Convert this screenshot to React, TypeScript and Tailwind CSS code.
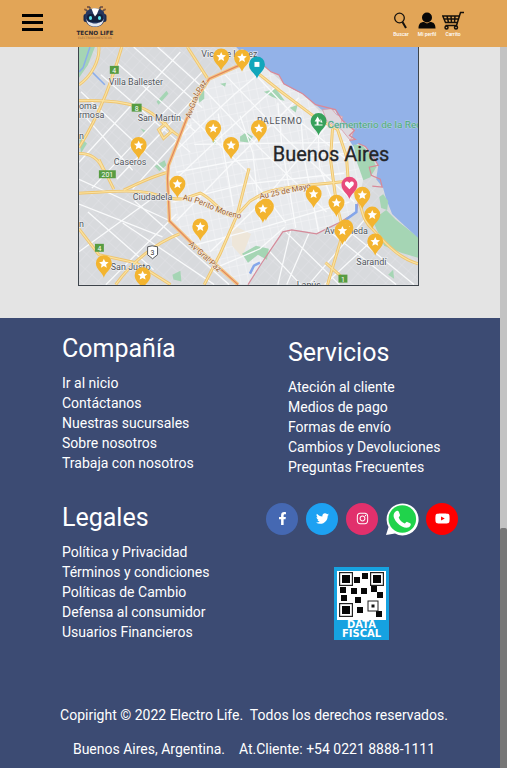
import type { ReactNode } from "react";
import { FaFacebookF, FaTwitter, FaInstagram, FaYoutube } from "react-icons/fa";

const company = ["Ir al nicio", "Contáctanos", "Nuestras sucursales", "Sobre nosotros", "Trabaja con nosotros"];
const services = ["Ateción al cliente", "Medios de pago", "Formas de envío", "Cambios y Devoluciones", "Preguntas Frecuentes"];
const legal = ["Política y Privacidad", "Términos y condiciones", "Políticas de Cambio", "Defensa al consumidor", "Usuarios Financieros"];

function LinkList({ title, items }: { title: string; items: string[] }) {
  return (
    <nav aria-label={title}>
      <h2 className="text-[25px] leading-8">{title}</h2>
      <ul className="mt-2 text-sm leading-5">
        {items.map((item) => (
          <li key={item} className="whitespace-nowrap">
            <a href="#">{item}</a>
          </li>
        ))}
      </ul>
    </nav>
  );
}

function HeaderButton({ label, children }: { label: string; children: ReactNode }) {
  return (
    <button type="button" className="flex w-[26px] flex-col items-center pt-[5px]">
      {children}
      <span className="text-[5px] leading-[7px] font-medium whitespace-nowrap text-white">{label}</span>
    </button>
  );
}

function Logo() {
  return (
    <svg viewBox="72 4 46 36" className="h-9 w-[46px]" role="img" aria-label="Tecno Life">
      <g fill="none" stroke="#2b3350" strokeWidth="1">
        <path d="M87 13V10H85M90 11V7H87M100 11V7H103M103 13V10H105" />
      </g>
      <g fill="#8b5a3a">
        <circle cx="85" cy="9.500" r="1" />
        <circle cx="88" cy="7" r="1" />
        <circle cx="102" cy="7" r="1" />
        <circle cx="105" cy="9.500" r="1" />
      </g>
      <rect x="83.500" y="14" width="4" height="8" rx="2" fill="#1d2b4c" />
      <rect x="102.500" y="14" width="4" height="8" rx="2" fill="#1d2b4c" />
      <path d="M85 17C85 11 89 8.500 95 8.500S105 11 105 17C105 23 101 27 95 27S85 23 85 17Z" fill="#26375f" />
      <path d="M86.500 19C88 22 92 23.500 95 23.500S102 22 103.500 19C103.500 24 100 26.500 95 26.500S86.500 24 86.500 19Z" fill="#e4e8ef" />
      <rect x="87" y="14" width="16" height="8" rx="3.500" fill="#14213d" />
      <path d="M91.500 8.800C94 8 97 8.200 99 9L97 14L95 16.500L93.500 14Z" fill="#fff" />
      <ellipse cx="90.500" cy="18" rx="1.600" ry="2" fill="#62e5ef" />
      <ellipse cx="99.500" cy="18" rx="1.600" ry="2" fill="#62e5ef" />
      <text x="95" y="35" textAnchor="middle" fontFamily="DejaVu Sans, sans-serif" fontWeight="700" fontSize="5.700" fill="#2d2932">TECNO LIFE</text>
      <text x="95" y="38.500" textAnchor="middle" fontFamily="DejaVu Sans, sans-serif" fontSize="3" fill="#9a6a3a">ELECTRODOMESTICOS</text>
    </svg>
  );
}

const stars = [
  [221, 57], [242, 58], [213, 129], [231, 146], [259, 129], [138, 146], [177, 185], [200, 228],
  [103, 265], [142, 277], [266, 208], [263, 210], [314, 195], [337, 204], [363, 196], [373, 216],
  [376, 243], [346, 229], [343, 232],
];

function Pin({ x, y, color, children }: { x: number; y: number; color: string; children: ReactNode }) {
  return (
    <g transform={`translate(${x} ${y})`}>
      <path d="M0 14C-1 9-8 6-8-0.500A8 8 0 0 1 8-0.500C8 6 1 9 0 14Z" fill={color} />
      {children}
    </g>
  );
}

const city = "M250 60L242 66L209 79L197 97L186 120L168 166L167 179L169 222L190 243L238 286H248L262 264L283 233L292 231L305 232L317 235L330 227L341 223L357 213L359 203L364 180L358 150L350 137L354 131L343 122L337 113L320 112L303 93L283 83L272 73L262 64Z";
const water = "M236 47H419V239L407 228L393 215L387 200L384 189L377 180L379 166L373 156L366 147L359 144L354 147L350 141L356 140L350 136L355 131L347 129L343 121L338 117L336 110L323 111L316 105L303 94L294 90L284 84L279 75L271 72L262 64L258 57L240 51Z";
const orangeRoads = [
  "M98 47C99 61 90 77 78 85", "M121 47C113 74 101 112 78 148", "M78 101C100 100 119 101 137 107C154 111 166 129 178 136",
  "M78 194C105 193 132 190 150 194C157 196 165 200 182 200L200 194C214 200 226 222 237 216L250 202L264 194C284 187 317 185 350 182",
  "M187 47L207 78", "M250 67L280 91L316 118L338 130L347 157L349 184", "M333 129L331 160L337 205L344 232L328 286",
  "M78 154C90 154 98 160 102 170M98 160L113 190", "M123 191C140 183 154 176 168 173", "M78 230L98 256L135 264L170 286",
  "M115 286C132 262 156 244 179 235", "M249 169L237 216L220 255L204 286", "M349 184C366 201 358 218 374 231C386 244 400 260 419 265",
  "M326 264L343 279", "M158 130L165 124L171 132L163 139Z",
];
const streets = [
  "M80 92L166 173M78 110L132 171M100 75L190 153M115 62L195 132M133 47L202 108M157 47L205 90",
  "M180 52L78 163M202 72L91 189M204 88L116 180M191 125L132 190",
  "M78 205L162 238M78 180L170 222M78 253L151 200M105 286L176 215M122 224L214 286M134 202L229 286M87 213L153 271",
  "M203 89L262 151L327 213M192 119L245 170L286 224M225 75L288 141L355 203M253 72L300 122L348 161",
  "M177 150L207 120L235 94L259 74M171 184L223 135L276 87M176 222L233 163L299 98M210 253L263 202L330 123",
  "M172 203L245 185L345 174M176 173L239 161L347 154M194 145L263 144L347 143M195 246L261 229L350 203M216 269L260 250L285 228",
  "M240 116L253 154L260 220M278 103L282 145L296 229M301 116L304 156L319 233M318 119L320 168L340 220M218 114L224 155L233 207",
  "M291 231L278 286M309 235L287 286M327 230L397 286M342 226L415 286M286 233L340 286M270 253L301 286M365 221L309 286M380 235L325 286",
];
const parks = [
  "M78 47H94L87 65L78 78Z", "M156 102L166 91L168 94L158 105Z", "M198 97L204 89L204 99L199 103Z",
  "M154 167L164 161L166 166L159 172Z", "M240 137L246 133L253 137L249 143L240 142Z", "M264 92L276 89L285 101L280 100L272 97Z",
  "M290 108L298 105L296 113Z", "M373 221L387 211L397 221L419 238V259L402 254L385 247Z",
  "M242 255L256 247L269 250L267 261L258 256L248 264Z", "M172 276L180 272L181 283L173 281Z", "M78 137L86 144L80 154Z",
  "M212 142L216 139L215 146Z", "M140 129L145 131L143 133Z", "M220 84L226 83L225 87Z", "M389 276L394 271L395 280Z",
];

function StoreMap() {
  return (
    <svg viewBox="78 47 341 239" className="block w-full" role="img" aria-label="Mapa de sucursales en Buenos Aires">
      <defs>
        <pattern id="suburb" width="9" height="12" patternUnits="userSpaceOnUse" patternTransform="rotate(42)">
          <path d="M0 0H9M0 0V12" stroke="#e3e5e8" strokeWidth="0.800" fill="none" />
        </pattern>
        <pattern id="blocks" width="8" height="10" patternUnits="userSpaceOnUse" patternTransform="rotate(-12)">
          <path d="M0 0H8M0 0V10" stroke="#f6f7f9" strokeWidth="0.900" fill="none" />
        </pattern>
      </defs>
      <rect x="78" y="47" width="341" height="239" fill="#d8dadd" />
      <rect x="78" y="47" width="341" height="239" fill="url(#suburb)" />
      <path d={city} fill="#e8eaed" />
      <path d={city} fill="url(#blocks)" />
      <path d="M231 225L251 235L242 258L232 247Z" fill="#eee6d9" />
      {parks.map((d) => <path key={d} d={d} fill="#a5d5b4" />)}
      <g fill="none" stroke="#f9fafb" strokeWidth="1.300">
        {streets.map((d) => <path key={d} d={d} />)}
      </g>
      <path d={water} fill="#93b2e8" />
      <path d="M323 110L332 109L337 115L343 117L342 123L355 130L351 141L342 130L327 121Z" fill="#ded9df" stroke="#d99aa8" strokeWidth="0.800" />
      <path d="M354 145L363 146L373 157L377 168L371 178L364 181L358 164Z" fill="#a5d5b4" />
      <path d="M380 198L384 195L389 202L388 211L382 209Z" fill="#a5d5b4" />
      <path d="M262 64L271 72L279 75L284 84L303 94L316 105L336 110L343 121L355 131L350 136L356 140L350 141M359 144L366 147L373 156L379 166L370 168L372 176L381 180L383 188L373 187" fill="none" stroke="#d98998" strokeWidth="1.200" />
      <path d="M248 286L262 264L283 233L292 231L317 235L341 223L357 213L359 203" fill="none" stroke="#d58b9a" strokeWidth="1.200" />
      <path d="M357 205L357 213L346 221M250 275L254 267L260 264" fill="none" stroke="#84a6ea" strokeWidth="2.500" />
      <path d="M89 47L82 68L78 72M90 71L104 85" fill="none" stroke="#8badeb" strokeWidth="1.500" />
      {orangeRoads.map((d) => <path key={d} d={d} fill="none" stroke="#efc570" strokeWidth="3" />)}
      {orangeRoads.map((d) => <path key={d} d={d} fill="none" stroke="#fae2a1" strokeWidth="1.200" />)}
      <path d="M247 62L209 79L197 97L186 120L168 166L167 179L169 222L190 243L238 286" fill="none" stroke="#f6c581" strokeWidth="3.500" />
      <path d="M247 62L209 79L197 97L186 120L168 166L167 179L169 222L190 243L238 286" fill="none" stroke="#df8660" strokeWidth="1.200" />
      <path id="paz-north" d="M190 119L198 97L212 74" fill="none" />
      <path id="paz-south" d="M188 246L232 286" fill="none" />
      <path id="perito" d="M182 201C205 203 213 217 250 221" fill="none" />
      <g fill="#579c42">
        <rect x="109" y="66" width="9" height="8" />
        <rect x="131" y="104" width="10" height="8" />
        <rect x="98" y="171" width="17" height="8" />
        <rect x="94" y="245" width="9" height="8" />
        <rect x="339" y="276" width="9" height="8" />
      </g>
      <path d="M147 248L151.500 247L157 248V256L152 260L147 256Z" fill="#fff" stroke="#55585c" />
      <g fontFamily="Roboto, sans-serif" textAnchor="middle" fontSize="7" fill="#fff">
        <text x="113.500" y="73">4</text>
        <text x="136" y="111">8</text>
        <text x="106.500" y="178">201</text>
        <text x="98.500" y="252">4</text>
        <text x="343.500" y="283">1</text>
        <text x="152" y="256" fill="#333">3</text>
      </g>
      <g fontFamily="Roboto, sans-serif" fontSize="9" fill="#50545a" stroke="#f1f2f4" strokeWidth="1.200" paintOrder="stroke">
        <text x="108" y="85">Villa Ballester</text>
        <text x="201" y="57">Vicente López</text>
        <text x="78" y="109">oma</text>
        <text x="78" y="118">rmosa</text>
        <text x="137" y="121">San Martín</text>
        <text x="113" y="166">Caseros</text>
        <text x="132" y="201">Ciudadela</text>
        <text x="78" y="140">n</text>
        <text x="78" y="228">n</text>
        <text x="110" y="271">San Justo</text>
        <text x="325" y="235">Avellaneda</text>
        <text x="357" y="266">Sarandí</text>
        <text x="297" y="289">Lanús</text>
        <text x="257" y="124" letterSpacing="0.800">PALERMO</text>
        <text x="328" y="128" fontSize="10" fill="#4da77b" stroke="#b5d5dc" strokeWidth="0.800">Cementerio de la Recoleta</text>
        <g fontSize="8" fill="#986034" stroke="#f6eddf">
          <text><textPath href="#paz-north">Av.Gral-Paz</textPath></text>
          <text><textPath href="#paz-south">Av-Gral-Paz</textPath></text>
          <text><textPath href="#perito">Au Perito Moreno</textPath></text>
          <text transform="translate(260 200) rotate(-12)">Au 25 de Mayo</text>
        </g>
      </g>
      {stars.map(([x, y]) => (
        <Pin key={`${x}-${y}`} x={x} y={y} color="#f3b42f">
          <path d="M0-5L1.400-1.900L4.800-1.600L2.200 0.700L3 4L0 2.300L-3 4L-2.200 0.700L-4.800-1.600L-1.400-1.900Z" fill="#fff" />
        </Pin>
      ))}
      <Pin x={257} y={65} color="#11a6bb"><rect x="-2.500" y="-3" width="5" height="5" fill="#fff" /></Pin>
      <Pin x={319} y={122} color="#36a15b"><path d="M-1-5L2 0H0V3H4V4H-4V3H-2V0H-4ZM2-3L4 1H2Z" fill="#fff" /></Pin>
      <Pin x={350} y={186} color="#e84b7c"><path d="M0 4L-4 0C-6-4-1-5 0-2C1-5 6-4 4 0Z" fill="#fff" /></Pin>
      <text x="273" y="162" fontFamily="Roboto, sans-serif" fontSize="20" fill="#242629" stroke="#242629" strokeWidth="0.300">Buenos Aires</text>
    </svg>
  );
}

function WhatsApp() {
  return (
    <svg viewBox="0 0 34 34" className="size-[34px]" aria-hidden="true">
      <path d="M1 33L3.500 25A16 16 0 1 1 10 31.500Z" fill="#fff" />
      <circle cx="17.300" cy="17" r="13.800" fill="#20d34b" />
      <path d="M11.500 9C12.500 8.500 13.500 9 13.800 9.800L15 13C15.300 14 13.500 15 13.800 15.700C15 18.500 17 20.300 19.800 21.400C20.500 21.600 21.300 19.600 22.200 19.900L25.200 21.300C26 21.700 25.900 22.700 25.500 23.500C24 26.300 20.500 26.100 17 24.400C13.500 22.700 10.800 19.800 9.300 16.500C7.900 13.400 8.900 10.200 11.500 9Z" fill="#fff" />
    </svg>
  );
}

function Finder({ x, y }: { x: number; y: number }) {
  return (
    <g transform={`translate(${x} ${y})`}>
      <rect width="14" height="14" fill="#222" />
      <rect x="1.200" y="1.200" width="11.600" height="11.600" fill="#fff" />
      <rect x="3" y="3" width="8" height="8" fill="#050505" />
    </g>
  );
}

const modules = [[20, 10], [28, 6], [6, 20], [17, 21], [27, 21], [37, 19], [7, 28], [21, 30], [43, 25], [23, 40], [42, 44]];

function DataFiscal() {
  return (
    <a href="#" aria-label="Data Fiscal" className="flex w-[55px] flex-col items-center bg-[#16a2e0] pt-1 pb-[2px] text-white">
      <svg viewBox="3 4 49 49" className="size-[49px]" aria-hidden="true">
        <rect x="3" y="4" width="49" height="49" fill="#fff" />
        <Finder x={5} y={5} />
        <Finder x={36} y={5} />
        <Finder x={5} y={36} />
        {modules.map(([x, y]) => <rect key={`${x}-${y}`} x={x} y={y} width="6" height="6" fill="#080808" />)}
        <rect x="34" y="34" width="10" height="10" fill="#fff" stroke="#222" />
        <rect x="37.500" y="37.500" width="3" height="3" fill="#111" />
      </svg>
      <span className="font-['DejaVu_Sans'] text-[10px] leading-[9px] font-bold">DATA</span>
      <span className="font-['DejaVu_Sans'] text-[10px] leading-[9px] font-bold">FISCAL</span>
    </a>
  );
}

function Social({ label, className, children }: { label: string; className: string; children: ReactNode }) {
  return (
    <a href="#" aria-label={label} className={`flex size-8 items-center justify-center rounded-full text-white ${className}`}>
      {children}
    </a>
  );
}

export default function App() {
  return (
    <div className="flex min-h-screen flex-col bg-[#3c4b73] font-['Roboto',sans-serif]">
      <header className="flex h-[47px] items-center justify-between bg-[#e2a557] pr-[41px] pb-[3px] pl-[22px]">
        <div className="flex items-center gap-[29px]">
          <button type="button" aria-label="Menú" className="flex w-[21px] flex-col gap-1">
            <span className="h-[3px] bg-black" />
            <span className="h-[3px] bg-black" />
            <span className="h-[3px] bg-black" />
          </button>
          <a href="#"><Logo /></a>
        </div>
        <div className="flex items-center">
          <HeaderButton label="Buscar">
            <svg viewBox="0 0 22 20" className="h-5 w-[22px]" fill="none" stroke="#17120d" aria-hidden="true">
              <circle cx="9.500" cy="7" r="4.800" strokeWidth="1.300" />
              <path d="M12.500 11L16 17" strokeWidth="2" />
            </svg>
          </HeaderButton>
          <HeaderButton label="Mi perfil">
            <svg viewBox="0 0 22 20" className="h-5 w-[22px]" aria-hidden="true">
              <circle cx="11" cy="6.500" r="5" fill="#080808" />
              <path d="M2.500 17.500C2.500 13 4.500 11 8 11L11 12.500L14 11C17.500 11 19.500 13 19.500 17.500Z" fill="#080808" />
            </svg>
          </HeaderButton>
          <HeaderButton label="Carrito">
            <svg viewBox="0 0 22 20" className="h-5 w-[22px]" fill="none" stroke="#15100a" strokeWidth="1.500" aria-hidden="true">
              <path d="M22 1.500H18.500L14.500 14.500H3.500M17 5H0.800L3.500 11.500H15.500M2 8H16M5 5L6.500 11.500M9 5L9.500 11.500M13 5L12.500 11.500" />
              <circle cx="4.500" cy="16.500" r="1.500" />
              <circle cx="14" cy="16.500" r="1.500" />
            </svg>
          </HeaderButton>
        </div>
      </header>
      <div className="flex grow">
        <div className="grow">
          <main className="bg-[#e4e4e4] pr-[81px] pb-8 pl-[78px]">
            <div className="border-x border-b border-[#3d444b]"><StoreMap /></div>
          </main>
          <footer className="text-white">
            <div className="grid grid-cols-[226px_1fr] pt-[15px] pl-[62px]">
              <div className="flex flex-col gap-[29px]">
                <LinkList title="Compañía" items={company} />
                <LinkList title="Legales" items={legal} />
              </div>
              <div className="pt-1">
                <LinkList title="Servicios" items={services} />
                <div className="-ml-[22px] mt-[26px] flex items-center gap-2">
                  <Social label="Facebook" className="bg-[#4568b2]"><FaFacebookF size={13} /></Social>
                  <Social label="Twitter" className="bg-[#1da1f2]"><FaTwitter size={13} /></Social>
                  <Social label="Instagram" className="bg-[#e1306c]"><FaInstagram size={13} /></Social>
                  <Social label="WhatsApp" className=""><span className="shrink-0"><WhatsApp /></span></Social>
                  <Social label="YouTube" className="bg-[#fe0000]"><FaYoutube size={15} /></Social>
                </div>
                <div className="mt-8 ml-[46px] flex"><DataFiscal /></div>
              </div>
            </div>
            <div className="mt-[63px] flex flex-col gap-[14px] pl-2 text-center text-sm leading-5 whitespace-pre">
              <p>{"Copiright © 2022 Electro Life.  Todos los derechos reservados."}</p>
              <p>{"Buenos Aires, Argentina.    At.Cliente: +54 0221 8888-1111"}</p>
            </div>
          </footer>
        </div>
        <div className="flex w-[7px] flex-col bg-[#c3c3c3]" aria-hidden="true">
          <div className="grow-2 basis-0" />
          <div className="grow basis-0 rounded-t-[2px] bg-[#777777]" />
        </div>
      </div>
    </div>
  );
}
